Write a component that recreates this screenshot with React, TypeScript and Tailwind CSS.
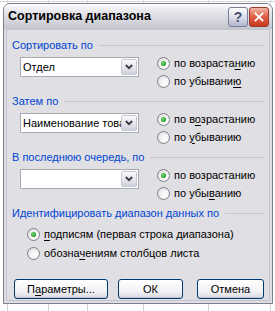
import React from "react";

const FONT = { fontFamily: '"Liberation Sans", Arial, sans-serif' };

function U({ children }: { children: React.ReactNode }) {
  return <span className="underline underline-offset-[2px] decoration-1">{children}</span>;
}

function Radio({ checked }: { checked?: boolean }) {
  return (
    <span className="relative inline-flex h-[13px] w-[13px] shrink-0 items-center justify-center rounded-full border border-[#7d8186] bg-[radial-gradient(circle_at_65%_65%,#ffffff_0%,#f4f4f4_40%,#d4d4d8_100%)]">
      {checked && (
        <span className="h-[5px] w-[5px] rounded-full bg-[radial-gradient(circle_at_40%_40%,#7fe07f_0%,#21a121_60%,#168016_100%)]" />
      )}
    </span>
  );
}

function RadioRow({ checked, children }: { checked?: boolean; children: React.ReactNode }) {
  return (
    <div className="flex h-[18px] items-center gap-[4px]">
      <Radio checked={checked} />
      <span className="whitespace-nowrap text-[11px] leading-none text-black">{children}</span>
    </div>
  );
}

function Combo({ value }: { value: string }) {
  return (
    <div className="flex h-[20px] w-[119px] items-stretch border border-[#a5acb2] bg-white p-[1px]">
      <div className="flex flex-1 items-center overflow-hidden whitespace-nowrap pl-[1px] text-[11px] leading-none text-black">
        {value}
      </div>
      <div className="flex w-[16px] shrink-0 items-center justify-center rounded-[2px] border border-[#c5c9d6] bg-[linear-gradient(#fbfbfc,#e3e3ea_60%,#cfcfda)]">
        <svg width="8" height="6" viewBox="0 0 8 6">
          <path d="M0.8 1 L4 4.2 L7.2 1" fill="none" stroke="#3b3b48" strokeWidth="1.8" />
        </svg>
      </div>
    </div>
  );
}

function GroupLabel({ children }: { children: React.ReactNode }) {
  return (
    <div className="flex h-[14px] items-center gap-[6px]">
      <span className="whitespace-nowrap text-[11px] leading-none text-[#0046d5]">{children}</span>
      <div className="h-px flex-1 bg-[#c6c6ce]" />
    </div>
  );
}

function SortGroup({
  label,
  value,
  asc,
  desc,
}: {
  label: React.ReactNode;
  value: string;
  asc: React.ReactNode;
  desc: React.ReactNode;
}) {
  return (
    <div className="flex flex-col">
      <GroupLabel>{label}</GroupLabel>
      <div className="mt-[2px] flex items-start">
        <div className="ml-[8px] mt-[3px]">
          <Combo value={value} />
        </div>
        <div className="ml-[18px] flex flex-col">
          <RadioRow checked>{asc}</RadioRow>
          <RadioRow>{desc}</RadioRow>
        </div>
      </div>
    </div>
  );
}

function Btn({ w, children }: { w: string; children: React.ReactNode }) {
  return (
    <div
      className={`${w} flex h-[20px] items-center justify-center rounded-[3px] border border-[#003c74] bg-[linear-gradient(#ffffff,#f3f3f6_60%,#d9d9e2)] text-[11px] leading-none text-black shadow-[inset_0_-1px_0_#c6c6d2]`}
    >
      {children}
    </div>
  );
}

export default function App() {
  const vlines = [7, 48, 87, 143, 208, 270];
  return (
    <div className="relative h-[311px] w-[275px] overflow-hidden bg-white" style={FONT}>
      {vlines.map((x) => (
        <div key={x} className="absolute top-0 h-full w-px bg-[#d4d4d4]" style={{ left: x }} />
      ))}
      <div className="absolute left-0 top-[1px] h-px w-full bg-[#d4d4d4]" />

      {/* window */}
      <div className="absolute left-[3px] top-[3px] flex h-[301px] w-[270px] flex-col rounded-t-[7px] border border-[#7d7f8c] bg-[#dddde6]">
        {/* title bar */}
        <div className="flex h-[25px] shrink-0 items-center rounded-t-[6px] bg-[linear-gradient(#fdfdfd,#e6e6ec_30%,#d4d4dc_70%,#c4c4ce)] pl-[4px] pr-[3px]">
          <span className="flex-1 text-[12.5px] font-bold leading-none text-black">Сортировка диапазона</span>
          <div className="flex gap-[1px]">
            <div className="flex h-[20px] w-[20px] items-center justify-center rounded-[3px] border border-[#7a7e9a] bg-[linear-gradient(#fefeff,#d6d8e6_60%,#b0b4cc)] text-[14px] font-bold leading-none text-[#4a5070]">
              ?
            </div>
            <div className="flex h-[20px] w-[20px] items-center justify-center rounded-[3px] border border-[#9a3b2c] bg-[linear-gradient(#f2b8a8,#e0644a_45%,#c8381c)]">
              <svg width="10" height="10" viewBox="0 0 10 10">
                <path d="M1.5 1.5 L8.5 8.5 M8.5 1.5 L1.5 8.5" stroke="#ffffff" strokeWidth="1.8" strokeLinecap="square" />
              </svg>
            </div>
          </div>
        </div>
        {/* content */}
        <div className="mx-[2px] mb-[2px] flex flex-1 flex-col border border-[#c4c4cc] bg-[#e0dfe3] px-[5px] pt-[8px]">
          <div className="flex flex-col gap-[4px]">
            <SortGroup
              label="Сортировать по"
              value="Отдел"
              asc={<>по возраста<U>н</U>ию</>}
              desc={<>по убывани<U>ю</U></>}
            />
            <SortGroup
              label="Затем по"
              value="Наименование товара"
              asc={<>по в<U>о</U>зрастанию</>}
              desc={<>по <U>у</U>быванию</>}
            />
            <SortGroup
              label="В последнюю очередь, по"
              value=""
              asc={<>по возрастанию</>}
              desc={<>по убы<U>в</U>анию</>}
            />
          </div>
          <div className="mt-[4px] flex flex-col">
            <GroupLabel>Идентифицировать диапазон данных по</GroupLabel>
            <div className="ml-[15px] mt-[5px] flex flex-col gap-[1px]">
              <RadioRow checked>
                <U>п</U>одписям (первая строка диапазона)
              </RadioRow>
              <RadioRow>
                обозна<U>ч</U>ениям столбцов листа
              </RadioRow>
            </div>
          </div>
          <div className="mt-[17px] flex items-center pl-[2px]">
            <Btn w="w-[96px]">
              П<U>а</U>раметры...
            </Btn>
            <div className="ml-[10px]">
              <Btn w="w-[65px]">ОК</Btn>
            </div>
            <div className="ml-[14px]">
              <Btn w="w-[67px]">Отмена</Btn>
            </div>
          </div>
        </div>
      </div>
    </div>
  );
}
